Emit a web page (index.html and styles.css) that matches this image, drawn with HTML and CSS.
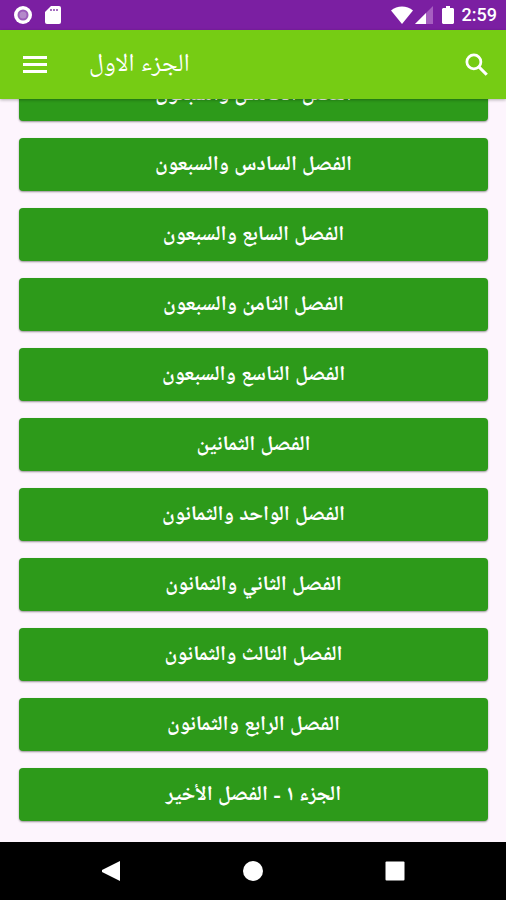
FILE: index.html
```html
<!DOCTYPE html>
<html lang="ar">
<head>
<meta charset="utf-8">
<meta name="viewport" content="width=device-width, initial-scale=1">
<title>الجزء الاول</title>
<link rel="stylesheet" href="styles.css">
</head>
<body>
<div class="status">
  <svg class="dot" viewBox="0 0 18 18" aria-hidden="true"><circle cx="9" cy="9" r="9" fill="#fff"/><circle cx="9" cy="9" r="5.500" fill="#9b5cba"/><circle cx="9" cy="9" r="3.500" fill="#b48aca"/></svg>
  <svg class="card" viewBox="0 0 16 18" aria-hidden="true"><path fill="#fff" d="M6 0h8a2 2 0 0 1 2 2v14a2 2 0 0 1-2 2H2a2 2 0 0 1-2-2V6z"/><path fill="#a56fc0" d="M5 3h2v2H5zM8 3h2v2H8zM11 3h2v2h-2z"/></svg>
  <span class="spacer"></span>
  <svg class="wifi" viewBox="0 0 24 18" aria-hidden="true"><path fill="#fff" d="M12 18 1 4.500C7-1 17-1 23 4.500z"/></svg>
  <svg class="cell" viewBox="0 0 18 18" aria-hidden="true"><path fill="#a65fc0" d="M0 18 18 0v18z"/><path fill="#fff" d="M0 18 11 7v11z"/></svg>
  <svg class="battery" viewBox="0 0 12 18" aria-hidden="true"><path fill="#fff" d="M4 0h4v2h3l1 1v14l-1 1H1l-1-1V3l1-1h3z"/></svg>
  <time>2:59</time>
</div>
<header class="bar">
  <button class="icon" aria-label="القائمة"><svg viewBox="0 0 30 30"><path fill="#fff" d="M3 6h24v3H3zM3 13h24v3H3zM3 20h24v3H3z"/></svg></button>
  <h1 dir="rtl">الجزء الاول</h1>
  <button class="icon" aria-label="بحث"><svg viewBox="0 0 24 24" fill="none" stroke="#fff" stroke-width="2.200"><circle cx="9.500" cy="9.500" r="5.600"/><path d="m13.600 13.600 6.200 6.200" stroke-width="2.500"/></svg></button>
</header>
<main class="list" dir="rtl">
  <button>الفصل الخامس والسبعون</button>
  <button>الفصل السادس والسبعون</button>
  <button>الفصل السابع والسبعون</button>
  <button>الفصل الثامن والسبعون</button>
  <button>الفصل التاسع والسبعون</button>
  <button>الفصل الثمانين</button>
  <button>الفصل الواحد والثمانون</button>
  <button>الفصل الثاني والثمانون</button>
  <button>الفصل الثالث والثمانون</button>
  <button>الفصل الرابع والثمانون</button>
  <button>الجزء ١ - الفصل الأخير</button>
</main>
<nav class="nav">
  <button aria-label="رجوع"><svg viewBox="0 0 20 20"><path fill="#fff" d="M19 0v20L1 11V9z"/></svg></button>
  <button aria-label="الرئيسية"><svg viewBox="0 0 20 20"><circle cx="10" cy="10" r="10" fill="#fff"/></svg></button>
  <button aria-label="التطبيقات"><svg viewBox="0 0 20 20"><rect x="0.500" y="0.500" width="19" height="19" rx="1" fill="#fff"/></svg></button>
</nav>
</body>
</html>
```

FILE: styles.css
```css
* { box-sizing: border-box; }
body {
  margin: 0;
  height: 100vh;
  display: flex;
  flex-direction: column;
  overflow: hidden;
  background: #fdf5fd;
  font-family: Roboto, "Noto Naskh Arabic UI", "Noto Naskh Arabic", "DejaVu Sans Condensed", "DejaVu Sans", sans-serif;
}
button { border: 0; padding: 0; font: inherit; color: inherit; }
svg { display: block; }
.status {
  flex: none;
  height: 30px;
  padding: 0 9px 0 14px;
  display: flex;
  align-items: center;
  background: #7b1fa2;
  color: #fff;
  font: 500 18px/32px Roboto, sans-serif;
}
.dot { width: 18px; height: 18px; }
.card { width: 16px; height: 18px; margin-left: 13px; }
.spacer { flex: 1; }
.wifi { width: 24px; height: 18px; }
.cell { width: 18px; height: 18px; margin-left: 1px; }
.battery { width: 12px; height: 18px; margin: 0 8px 0 9px; }
.bar {
  flex: none;
  height: 69px;
  padding: 0 9px 0 15px;
  display: flex;
  align-items: center;
  background: #76cc14;
  color: #fff;
  z-index: 1;
  box-shadow: 0 1px 3px rgba(0, 0, 0, 0.3);
}
.icon { width: 40px; height: 40px; display: grid; place-items: center; background: none; }
.icon svg { width: 30px; height: 30px; }
h1 {
  flex: 1;
  margin: 0 34px;
  padding-top: 2px;
  font-size: 25px;
  font-weight: 400;
  line-height: 40px;
  text-align: left;
}
.list {
  flex: 1;
  min-height: 0;
  overflow: hidden;
  padding: 0 18px 21px 19px;
  display: flex;
  flex-direction: column;
  justify-content: flex-end;
  gap: 17px;
}
.list button {
  flex: none;
  height: 53px;
  padding-top: 2px;
  border-radius: 4px;
  background: #2d9a1a;
  color: #fff;
  font-size: 21px;
  font-weight: 700;
  line-height: 32px;
  box-shadow: 0 1px 2px rgba(0, 0, 0, 0.4);
}
.nav {
  flex: none;
  height: 58px;
  padding: 0 40px;
  display: flex;
  background: #000;
}
.nav button { flex: 1; display: grid; place-items: center; background: none; }
.nav svg { width: 20px; height: 20px; }
```
